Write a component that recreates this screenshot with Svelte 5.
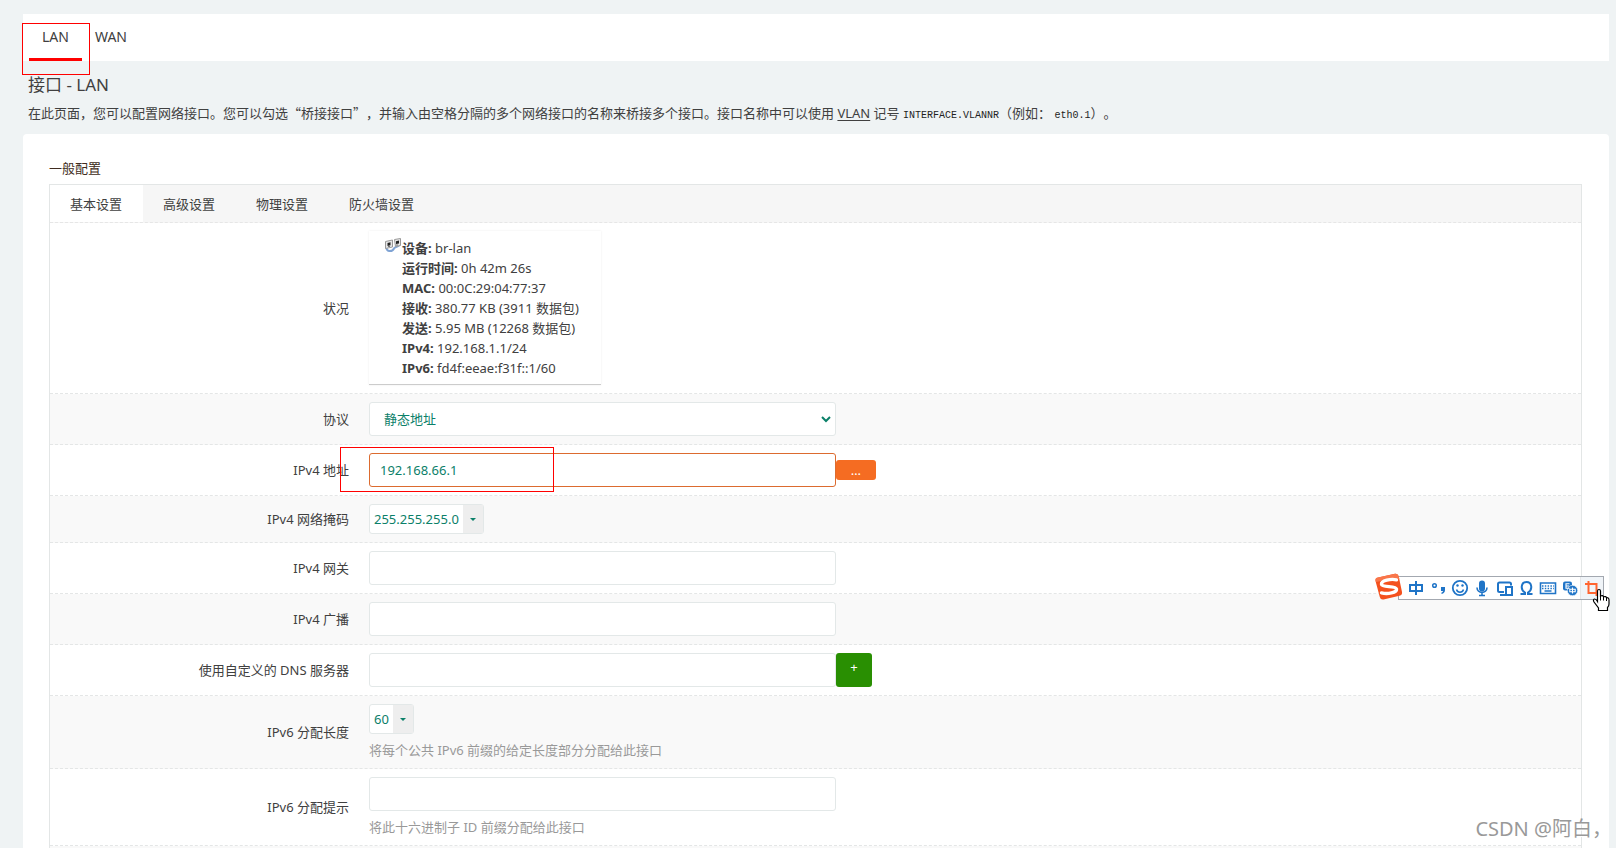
<script>
  const tabs = ['基本设置', '高级设置', '物理设置', '防火墙设置'];
  let active = $state('基本设置');
  const stats = [
    ['设备', 'br-lan'],
    ['运行时间', '0h 42m 26s'],
    ['MAC', '00:0C:29:04:77:37'],
    ['接收', '380.77 KB (3911 数据包)'],
    ['发送', '5.95 MB (12268 数据包)'],
    ['IPv4', '192.168.1.1/24'],
    ['IPv6', 'fd4f:eeae:f31f::1/60'],
  ];
</script>

<div class="page">
  <nav class="ifaces">
    <a class="on" href="#lan">LAN</a>
    <a href="#wan">WAN</a>
  </nav>

  <header>
    <h2>接口 - LAN</h2>
    <p>在此页面，您可以配置网络接口。您可以勾选<span class="quoted">“桥接接口”，</span>并输入由空格分隔的多个网络接口的名称来桥接多个接口。接口名称中可以使用 <abbr>VLAN</abbr> 记号 <samp>INTERFACE.VLANNR</samp>（例如： <samp>eth0.1</samp>）。</p>
  </header>

  <main class="card">
    <h3>一般配置</h3>
    <div class="panel">
      <div class="tabs" role="tablist">
        {#each tabs as t}
          <button type="button" role="tab" class:on={active === t} aria-selected={active === t} onclick={() => (active = t)}>{t}</button>
        {/each}
      </div>

      <div class="row">
        <span class="label">状况</span>
        <div class="field">
          <div class="status">
            <svg width="17" height="16" viewBox="0 0 17 16" aria-hidden="true">
              <path d="M1.500 9.500c-.500 4.500 6 4.500 7.500 1 .500-2 3-1 5.500-3.500" fill="none" stroke="#7fa3d4" stroke-width="2" />
              <path d="M.500 3.500l7-1.500v7l-7 1.500zM9.500 1.500l6-1v7l-5 1z" fill="#e6e6e6" stroke="#999" />
              <path d="M2.500 5l3-.700v3l-3 .700zM11 3.200l3-.600v2.800l-3 .600z" fill="#222" />
              <path d="M3 8.500h2M11 7h2" stroke="#777" />
            </svg>
            <div>
              {#each stats as [k, v]}
                <div><strong>{k}:</strong> {v}</div>
              {/each}
            </div>
          </div>
        </div>
      </div>

      <div class="row">
        <label class="label" for="proto">协议</label>
        <div class="field">
          <div class="select">
            <select id="proto"><option>静态地址</option></select>
            <svg width="10" height="7" viewBox="0 0 10 7" aria-hidden="true"><path d="M1 1l4 4 4-4" fill="none" stroke="#0b8069" stroke-width="2" /></svg>
          </div>
        </div>
      </div>

      <div class="row">
        <label class="label" for="addr">IPv4 地址</label>
        <div class="field inline">
          <input id="addr" class="hot" type="text" value="192.168.66.1" />
          <button type="button" class="more">…</button>
        </div>
      </div>

      <div class="row">
        <span class="label">IPv4 网络掩码</span>
        <div class="field">
          <button type="button" class="drop" aria-label="IPv4 网络掩码"><span>255.255.255.0</span><i></i></button>
        </div>
      </div>

      <div class="row">
        <label class="label" for="gw">IPv4 网关</label>
        <div class="field"><input id="gw" type="text" /></div>
      </div>

      <div class="row">
        <label class="label" for="bc">IPv4 广播</label>
        <div class="field"><input id="bc" type="text" /></div>
      </div>

      <div class="row">
        <label class="label" for="dns">使用自定义的 DNS 服务器</label>
        <div class="field inline">
          <input id="dns" type="text" />
          <button type="button" class="add">+</button>
        </div>
      </div>

      <div class="row">
        <span class="label">IPv6 分配长度</span>
        <div class="field">
          <button type="button" class="drop" aria-label="IPv6 分配长度"><span>60</span><i></i></button>
          <p class="hint">将每个公共 IPv6 前缀的给定长度部分分配给此接口</p>
        </div>
      </div>

      <div class="row">
        <label class="label" for="ip6hint">IPv6 分配提示</label>
        <div class="field">
          <input id="ip6hint" type="text" />
          <p class="hint">将此十六进制子 ID 前缀分配给此接口</p>
        </div>
      </div>

      <div class="row next"></div>
    </div>
  </main>

  <div class="mark mark-tab"></div>
  <div class="mark mark-addr"></div>

  <div class="ime">
    <svg width="237" height="42" viewBox="0 0 237 42" aria-hidden="true">
      <rect x="25.500" y="6.500" width="205" height="23" fill="#fff" stroke="#a3a8b0" />
      <rect x="207" y="7" width="23" height="22" fill="#f0f4f8" />
      <path d="M207.500 7v22" stroke="#e4e6e8" />
      <!-- brand tile -->
      <g transform="translate(2 3)">
        <path d="M3 4.500L20 .800Q23 .300 23.700 3.300L27 19Q27.500 22 24.500 22.800L8.500 26.500Q5.500 27 4.800 24L.500 8Q0 5 3 4.500z" fill="#f4511e" />
        <path d="M1 9L.500 7Q0 5 3 4.500L20 .800Q23 .300 23.700 3.300L24.300 6Q12 6 1 9z" fill="#f9764a" />
        <path d="M21.500 6.800C16 5.500 6 7.500 6.500 11.300c.500 3.500 14.500 1.200 15 4.800.400 3.600-9 5.400-15 3.800" fill="none" stroke="#fff" stroke-width="3.400" stroke-linecap="round" />
      </g>
      <g transform="translate(-3 0)">
        <g fill="none" stroke="#1f74c7" stroke-width="2">
          <path d="M40 15h12v6H40zM46 11v14" />
          <circle cx="64.500" cy="15.500" r="1.800" stroke-width="1.500" />
          <circle cx="90" cy="18" r="7.200" stroke-width="1.800" />
          <path d="M86.500 19.500c1 3.600 6 3.600 7 0" stroke-width="1.500" />
          <path d="M107 17.500c0 6.500 10 6.500 10 0M112 22v4M109 25.500h6" stroke-width="1.600" />
          <path d="M134 22h-4.500q-1.500 0-1.500-1.500v-6.500q0-1.500 1.500-1.500h10q1.500 0 1.500 1.500v1.500M130 25h5" />
          <path d="M136 17h6v8h-6z" />
          <path d="M150.500 24h4.500v-1.500c-5-3-4-10.500 1.500-10.500s6.500 7.500 1.500 10.500V24h4.500" />
          <path d="M170.500 13h15v10.500h-15z" stroke-width="1.600" />
          <path d="M172 16h12M172 18.500h12" stroke-width="1.500" stroke-dasharray="1.500 1.300" />
          <path d="M174.500 21h7" stroke-width="1.500" />
        </g>
        <g fill="#1f74c7">
          <path d="M71 17h4v3q0 3-3.500 4v-1.500q1.500-.500 1.500-1.500h-2z" />
          <circle cx="87.500" cy="15.500" r="1.200" /><circle cx="92.500" cy="15.500" r="1.200" />
          <rect x="109" y="10.500" width="6" height="11" rx="3" />
          <rect x="193" y="11.500" width="9" height="9" rx="2" />
          <circle cx="202.500" cy="20.500" r="5.200" stroke="#fff" stroke-width=".600" />
        </g>
        <path d="M199.500 13.700h-3.500v4.600h3.500M196 16h3M199.800 19.300h5.400v2.400h-5.400zM202.500 17.500v6" fill="none" stroke="#fff" stroke-width="1.100" />
        <path d="M215 14h11.500v12M218.500 11v12h11" fill="none" stroke="#ff6430" stroke-width="2" />
      </g>
      <!-- pointing hand -->
      <g transform="translate(220 19)">
        <path d="M4.500 2q0-1.500 1.500-1.500T7.500 2v5q2.500-1 3 .800 2.500-.800 3 .900 2.500-.300 2.500 2.300v4q0 2-1.500 3.500v3h-9v-2.500L1 13Q-.300 10.500 1.500 10q1.500-.200 3 2.500z" fill="#fff" stroke="#000" stroke-width="1.200" />
        <path d="M7.500 7v4.500M10.500 8v3.500M13.500 9v3" stroke="#000" />
      </g>
    </svg>
  </div>

  <div class="watermark">CSDN @阿白，</div>
</div>

<style>
  :global(body) { margin: 0; background: #eff3f4; }
  * { box-sizing: border-box; }
  .page {
    position: relative;
    height: 100vh;
    overflow: hidden;
    padding: 14px 7px 0 23px;
    background: #eff3f4;
    color: #404040;
    font: 13px/20px "Noto Sans", "Noto Sans CJK SC", sans-serif;
    text-spacing-trim: space-all;
  }
  button, input, select { font: inherit; margin: 0; }
  .ifaces { display: flex; height: 47px; padding-left: 6px; background: #fff; font-size: 14px; }
  .ifaces a { padding: 13px 13px 0; color: #404040; text-decoration: none; }
  .ifaces a.on { border-bottom: 3px solid #f00; }
  header { padding: 12px 5px 11px; }
  h2 { margin: 0; font-size: 17px; font-weight: 400; line-height: 24px; }
  header p { margin: 6px 0 0; white-space: nowrap; }
  .quoted { font-family: "Noto Sans CJK SC", sans-serif; line-height: 1; }
  abbr { text-decoration: underline; text-underline-offset: 2px; }
  samp { font: 10px "Liberation Mono", monospace; color: #222; }
  .card { padding: 24px 27px 0 26px; background: #fff; border-radius: 4px; }
  h3 { margin: 0 0 6px; font-size: 13px; font-weight: 400; line-height: 20px; color: #402c20; }
  .panel { border: 1px solid #e3e6e6; }
  .tabs { display: flex; height: 38px; background: #f6f6f6; border-bottom: 1px dashed #e6e6e6; }
  .tabs button { padding: 0 21px 0 20px; border: 0; background: none; color: #404040; }
  .tabs .on { background: #fff; }
  .row { display: flex; align-items: center; padding: 8px 0; border-bottom: 1px dashed #e4e6e6; }
  .row:nth-child(odd) { background: #f9f9f9; }
  .next { height: 51px; }
  .label { width: 299px; flex: none; text-align: right; }
  .field { flex: 1; margin-left: 20px; }
  .inline { display: flex; align-items: center; }
  input, select {
    display: block;
    width: 467px;
    height: 34px;
    padding: 0 10px;
    border: 1px solid #e3e8e8;
    border-radius: 3px;
    background: #fff;
    color: #0b8069;
    outline: 0;
  }
  input.hot { border-color: #dc6b2f; }
  .select { position: relative; width: 467px; }
  select { appearance: none; padding: 0 14px; }
  .select svg { position: absolute; right: 5px; top: 14px; }
  .status {
    display: flex;
    width: 232px;
    padding: 7px 0 6px 16px;
    border-bottom: 1px solid #ccc;
    box-shadow: 0 0 2px rgba(0, 0, 0, 0.08);
  }
  .status svg { flex: none; }
  .drop {
    display: flex;
    height: 30px;
    padding: 0;
    border: 1px solid #e3e8e8;
    border-radius: 3px;
    background: #fff;
    color: #0b8069;
    line-height: 28px;
  }
  .drop span { padding: 0 4px; }
  .drop i { display: flex; width: 20px; align-items: center; justify-content: center; background: #eee; }
  .drop i::before { content: ""; border: 3px solid transparent; border-top-color: #0b8069; border-bottom: 0; }
  .hint { margin: 6px 0 0; color: #999; }
  .more { width: 40px; height: 20px; padding: 0; border: 0; border-radius: 3px; background: #f56c22; color: #fff; line-height: 20px; }
  .add { width: 36px; height: 34px; padding: 0 0 6px; border: 0; border-radius: 3px; background: #298f02; color: #fff; }
  .mark { position: absolute; border: 1px solid #f00; pointer-events: none; }
  .mark-tab { left: 22px; top: 23px; width: 68px; height: 52px; }
  .mark-addr { left: 340px; top: 447px; width: 214px; height: 45px; }
  .ime { position: absolute; right: 6px; top: 570px; }
  .ime svg { display: block; }
  .watermark {
    position: absolute;
    right: 4px;
    bottom: 5px;
    color: #999;
    font-size: 20px;
    line-height: 28px;
    text-shadow: 1px 1px 0 #fff;
  }
</style>
